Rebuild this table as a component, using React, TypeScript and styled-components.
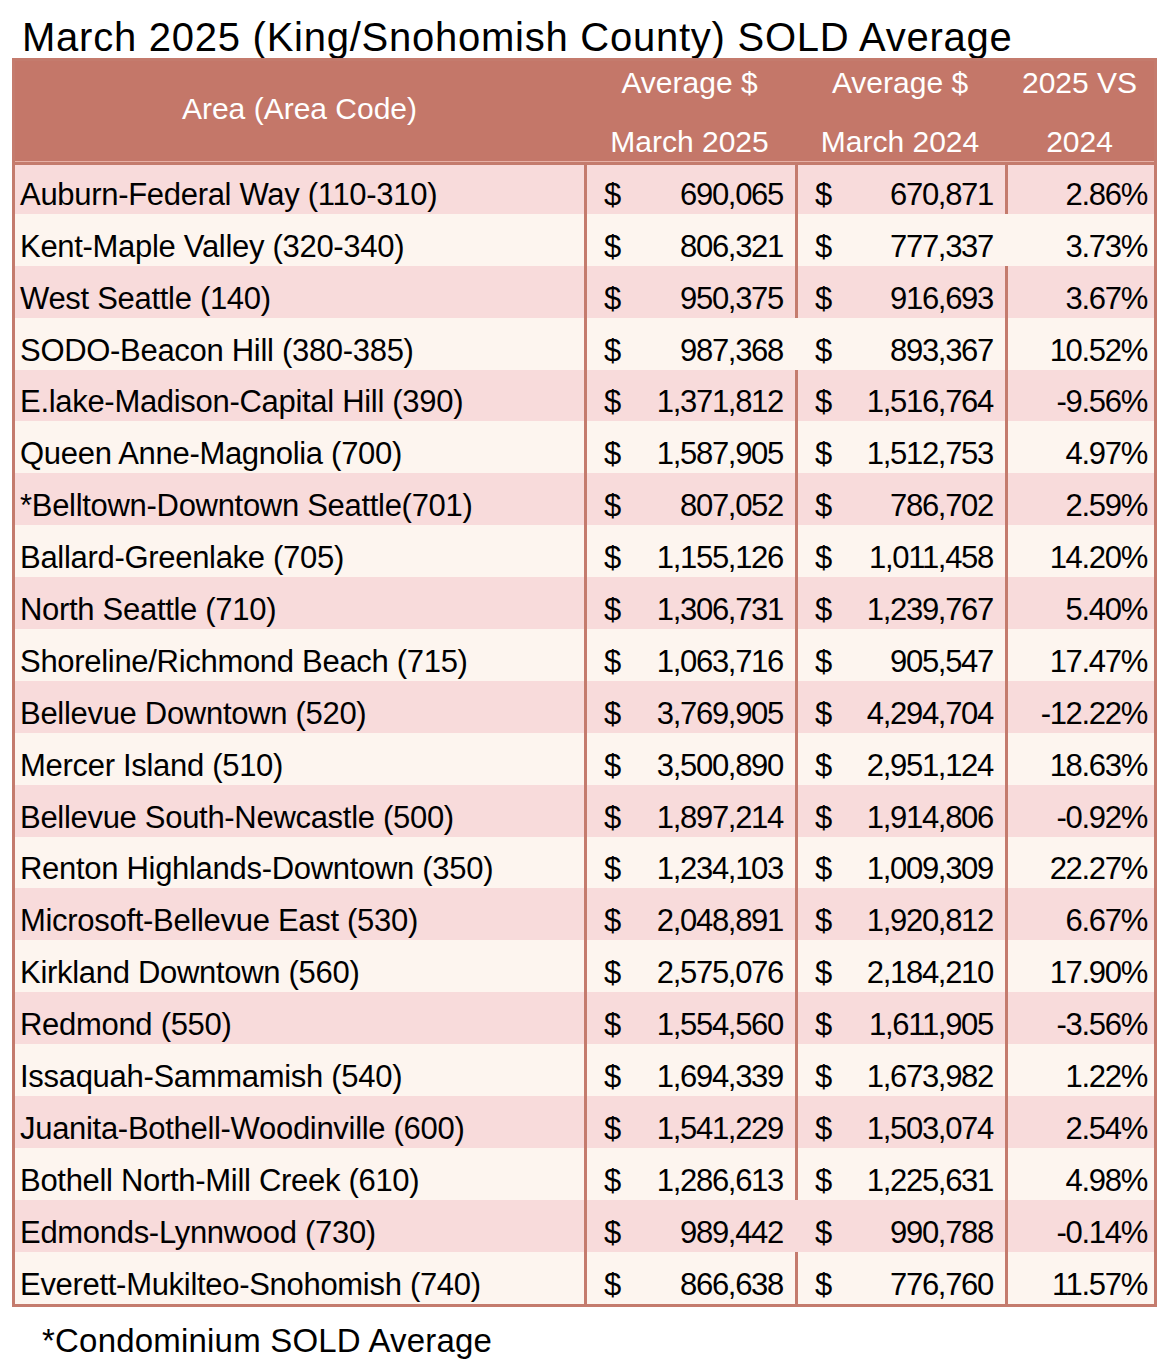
import { createGlobalStyle } from "styled-components";
import styled from "styled-components";

const Global = createGlobalStyle`
    body {
        margin: 0;
        background: #ffffff;
        font-family: "Liberation Sans", Arial, sans-serif;
        color: #000000;
    }
`

const Page = styled.div`
    width: 1170px;
    height: 1366px;
    box-sizing: border-box;
    padding: 16px 0 0 12px;
    display: flex;
    flex-direction: column;
`

const Title = styled.div`
    font-size: 40px;
    line-height: 42px;
    height: 42px;
    letter-spacing: 0.75px;
    padding-left: 10px;
    white-space: nowrap;
`

const Table = styled.div`
    width: 1145px;
    box-sizing: border-box;
    border: 3px solid #c47b6d;
    display: flex;
    flex-direction: column;
`

const cols = "569px 211px 210px 149px"

const Header = styled.div`
    display: grid;
    grid-template-columns: ${cols};
    height: 101px;
    box-sizing: border-box;
    background: #c47769;
    border-bottom: 1px solid #e6b0a6;
    color: #ffffff;
    font-size: 30px;
`

const HeadCell = styled.div<{ $single?: boolean }>`
    display: flex;
    flex-direction: column;
    align-items: center;
    justify-content: center;
    gap: 29px;
    padding-top: ${p => p.$single ? '0' : '3px'};
    padding-bottom: ${p => p.$single ? '4px' : '0'};
    line-height: 30px;
    white-space: nowrap;
`

const Row = styled.div<{ $pink: boolean }>`
    display: grid;
    grid-template-columns: ${cols};
    height: 51.9px;
    box-sizing: border-box;
    background: ${p => p.$pink ? '#f8dbdb' : '#fdf5ef'};
    font-size: 31px;
    line-height: 30px;

    &:first-child {
        border-top: 3px solid #c47b6d;
    }
`

const Cell = styled.div<{ $line?: boolean }>`
    display: flex;
    align-items: flex-end;
    justify-content: space-between;
    box-sizing: border-box;
    padding-bottom: 4px;
    border-left: 3px solid ${p => p.$line ? '#c47b6d' : 'transparent'};
    white-space: nowrap;
`

const Label = styled(Cell)`
    padding-left: 2px;
    letter-spacing: -0.3px;
`

const Money = styled(Cell)`
    padding-left: 17px;
    padding-right: 12px;
    letter-spacing: -1.3px;
`

const Pct = styled(Cell)`
    justify-content: flex-end;
    padding-right: 7px;
    letter-spacing: -1.3px;
`

const Footnote = styled.div`
    margin-top: 16px;
    padding-left: 30px;
    font-size: 33px;
    line-height: 36px;
    letter-spacing: 0.2px;
`

type Item = [string, string, string, string]

const rows: Item[] = [
    ["Auburn-Federal Way (110-310)", "690,065", "670,871", "2.86%"],
    ["Kent-Maple Valley (320-340)", "806,321", "777,337", "3.73%"],
    ["West Seattle (140)", "950,375", "916,693", "3.67%"],
    ["SODO-Beacon Hill (380-385)", "987,368", "893,367", "10.52%"],
    ["E.lake-Madison-Capital Hill (390)", "1,371,812", "1,516,764", "-9.56%"],
    ["Queen Anne-Magnolia (700)", "1,587,905", "1,512,753", "4.97%"],
    ["*Belltown-Downtown Seattle(701)", "807,052", "786,702", "2.59%"],
    ["Ballard-Greenlake (705)", "1,155,126", "1,011,458", "14.20%"],
    ["North Seattle (710)", "1,306,731", "1,239,767", "5.40%"],
    ["Shoreline/Richmond Beach (715)", "1,063,716", "905,547", "17.47%"],
    ["Bellevue Downtown (520)", "3,769,905", "4,294,704", "-12.22%"],
    ["Mercer Island (510)", "3,500,890", "2,951,124", "18.63%"],
    ["Bellevue South-Newcastle (500)", "1,897,214", "1,914,806", "-0.92%"],
    ["Renton Highlands-Downtown (350)", "1,234,103", "1,009,309", "22.27%"],
    ["Microsoft-Bellevue East (530)", "2,048,891", "1,920,812", "6.67%"],
    ["Kirkland Downtown (560)", "2,575,076", "2,184,210", "17.90%"],
    ["Redmond (550)", "1,554,560", "1,611,905", "-3.56%"],
    ["Issaquah-Sammamish (540)", "1,694,339", "1,673,982", "1.22%"],
    ["Juanita-Bothell-Woodinville (600)", "1,541,229", "1,503,074", "2.54%"],
    ["Bothell North-Mill Creek (610)", "1,286,613", "1,225,631", "4.98%"],
    ["Edmonds-Lynnwood (730)", "989,442", "990,788", "-0.14%"],
    ["Everett-Mukilteo-Snohomish (740)", "866,638", "776,760", "11.57%"],
]

// rows where the source sheet drops a column rule
const noRule3 = [3, 20]
const noRule4 = [1]

export default function App() {
    return (
        <Page>
            <Global />
            <Title>March 2025 (King/Snohomish County) SOLD Average</Title>
            <Table>
                <Header>
                    <HeadCell $single>Area (Area Code)</HeadCell>
                    <HeadCell><span>Average $</span><span>March 2025</span></HeadCell>
                    <HeadCell><span>Average $</span><span>March 2024</span></HeadCell>
                    <HeadCell><span>2025 VS</span><span>2024</span></HeadCell>
                </Header>
                <div>
                    {rows.map((r, i) => (
                        <Row key={r[0]} $pink={i % 2 === 0}>
                            <Label>{r[0]}</Label>
                            <Money $line><span>$</span><span>{r[1]}</span></Money>
                            <Money $line={!noRule3.includes(i)}><span>$</span><span>{r[2]}</span></Money>
                            <Pct $line={!noRule4.includes(i)}>{r[3]}</Pct>
                        </Row>
                    ))}
                </div>
            </Table>
            <Footnote>*Condominium SOLD Average</Footnote>
        </Page>
    )
}
